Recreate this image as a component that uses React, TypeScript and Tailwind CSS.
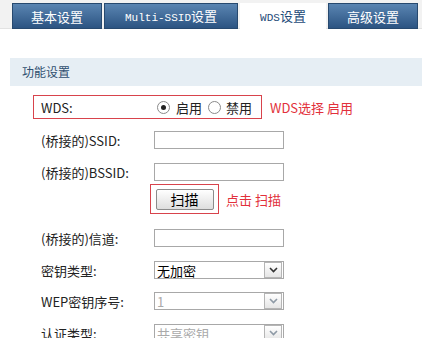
import type { ReactNode } from "react";

const cjk = { fontFamily: '"Noto Sans CJK SC", "Noto Sans", sans-serif' };
const mono = { fontFamily: '"Liberation Mono", monospace' };

type TabProps = { label: ReactNode; width: string; active?: boolean };

function Tab({ label, width, active }: TabProps) {
  return (
    <div
      className={`${width} h-[26px] flex items-center justify-center text-[13px] leading-none ${
        active
          ? "bg-white text-[#1d4a78]"
          : "bg-gradient-to-b from-[#5a85b2] to-[#2c5482] text-white border border-[#27496f]"
      }`}
    >
      {label}
    </div>
  );
}

function Radio({ checked }: { checked?: boolean }) {
  return (
    <span className="w-[13px] h-[13px] rounded-full border border-[#8a8a8a] bg-white flex items-center justify-center">
      {checked && <span className="w-[5px] h-[5px] rounded-full bg-[#222]" />}
    </span>
  );
}

function TextInput() {
  return <div className="w-[130px] h-[18px] border border-[#a8a8a8] bg-white" />;
}

function Select({ value, disabled }: { value: string; disabled?: boolean }) {
  return (
    <div className="w-[130px] h-[18px] border border-[#a8a8a8] bg-white flex items-center">
      <span
        className={`flex-1 pl-[2px] text-[13px] leading-none ${disabled ? "text-[#aaaaaa]" : "text-black"}`}
      >
        {value}
      </span>
      <span className="w-[18px] h-[16px] mr-px border border-[#b5b5b5] bg-gradient-to-b from-white to-[#e6e6e6] flex items-center justify-center">
        <svg width="9" height="6" viewBox="0 0 9 6">
          <path
            d="M1 1 L4.5 4.5 L8 1"
            fill="none"
            stroke={disabled ? "#8e9aa6" : "#333"}
            strokeWidth="1.6"
          />
        </svg>
      </span>
    </div>
  );
}

function Row({ label, children, className }: { label: string; children: ReactNode; className: string }) {
  return (
    <div className={`flex items-center pl-[8px] ${className}`}>
      <span className="w-[113px] text-[13px] leading-none text-[#222]">{label}</span>
      {children}
    </div>
  );
}

export default function App() {
  return (
    <div className="w-[422px] h-[338px] overflow-hidden bg-white" style={cjk}>
      <div className="h-[29px] bg-[#f2f2f2] border-b border-[#e2e2e2] pt-[3px] pl-[12px] flex gap-[2px]">
        <Tab width="w-[90px]" label="基本设置" />
        <Tab
          width="w-[134px]"
          label={
            <span>
              <span style={mono} className="text-[11px]">
                Multi-SSID
              </span>
              设置
            </span>
          }
        />
        <Tab
          width="w-[86px]"
          active
          label={
            <span>
              <span style={mono} className="text-[11px]">
                WDS
              </span>
              设置
            </span>
          }
        />
        <Tab width="w-[90px]" label="高级设置" />
      </div>

      <div className="mt-[29px] ml-[10px] h-[28px] bg-[#e6eef4] flex items-center pl-[12px] text-[12px] text-[#2f4f6f]">
        功能设置
      </div>

      <div className="pl-[33px]">
        <div className="mt-[9px] flex items-center">
          <div className="w-[229px] h-[24px] border border-[#d8434c] flex items-center pl-[7px]">
            <span className="w-[116px] text-[13px] leading-none text-[#222]">WDS:</span>
            <Radio checked />
            <span className="ml-[6px] text-[13px] leading-none text-[#222]">启用</span>
            <span className="ml-[6px]">
              <Radio />
            </span>
            <span className="ml-[5px] text-[13px] leading-none text-[#222]">禁用</span>
          </div>
          <span className="ml-[8px] text-[13px] leading-none text-[#e2303b]">WDS选择 启用</span>
        </div>

        <Row label="(桥接的)SSID:" className="mt-[12px]">
          <TextInput />
        </Row>
        <Row label="(桥接的)BSSID:" className="mt-[14px]">
          <TextInput />
        </Row>

        <div className="mt-[3px] flex items-center pl-[117px]">
          <div className="w-[69px] h-[30px] border border-[#d8434c] flex items-center justify-center">
            <button
              type="button"
              className="w-[58px] h-[21px] rounded-[2px] border border-[#8c8c8c] bg-gradient-to-b from-white to-[#dedede] text-[14px] leading-none text-black"
            >
              扫描
            </button>
          </div>
          <span className="ml-[7px] text-[13px] leading-none text-[#e2303b]">点击 扫描</span>
        </div>

        <Row label="(桥接的)信道:" className="mt-[15px]">
          <TextInput />
        </Row>
        <Row label="密钥类型:" className="mt-[14px]">
          <Select value="无加密" />
        </Row>
        <Row label="WEP密钥序号:" className="mt-[13px]">
          <Select value="1" disabled />
        </Row>
        <Row label="认证类型:" className="mt-[14px]">
          <Select value="共享密钥" disabled />
        </Row>
      </div>
    </div>
  );
}
